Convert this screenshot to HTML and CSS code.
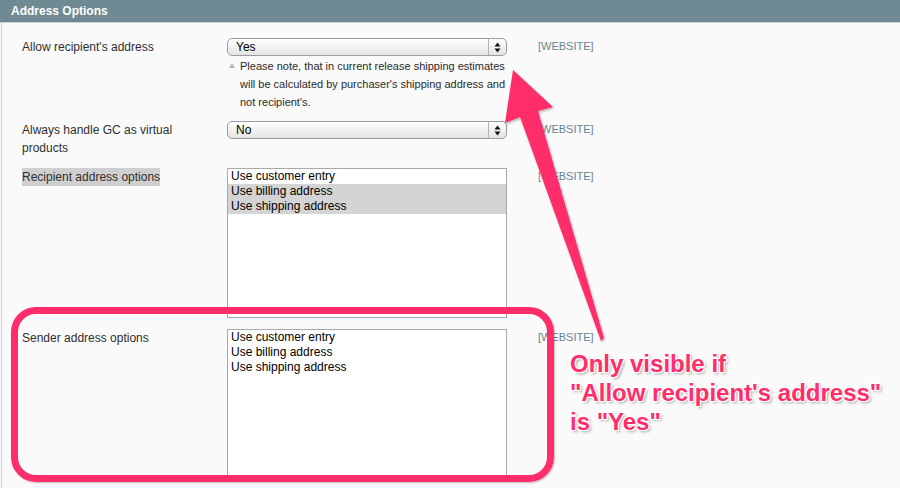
FILE: index.html
```html
<!DOCTYPE html>
<html lang="en">
<head>
    <meta charset="UTF-8">
    <meta name="viewport" content="width=device-width, initial-scale=1.0">
    <title>Address Options</title>
    <link rel="stylesheet" href="styles.css">
</head>
<body>
    <!-- Section header -->
    <div class="section-head">Address Options</div>

    <div class="fieldset">
        <div class="row">
            <div class="label">Allow recipient's address</div>
            <div class="value">
                <div class="select">
                    <span class="select-text">Yes</span>
                    <span class="select-arrows">
                        <svg width="7" height="11" viewBox="0 0 7 11"><path d="M3.5 0.5 L6.5 4.5 L0.5 4.5 Z M3.5 10.5 L6.5 6.5 L0.5 6.5 Z" fill="#111"/></svg>
                    </span>
                </div>
                <p class="note"><span class="note-icon"></span><span>Please note, that in current release shipping estimates will be calculated by purchaser's shipping address and not recipient's.</span></p>
            </div>
            <div class="scope">[WEBSITE]</div>
        </div>

        <div class="row">
            <div class="label">Always handle GC as virtual products</div>
            <div class="value">
                <div class="select">
                    <span class="select-text">No</span>
                    <span class="select-arrows">
                        <svg width="7" height="11" viewBox="0 0 7 11"><path d="M3.5 0.5 L6.5 4.5 L0.5 4.5 Z M3.5 10.5 L6.5 6.5 L0.5 6.5 Z" fill="#111"/></svg>
                    </span>
                </div>
            </div>
            <div class="scope">[WEBSITE]</div>
        </div>

        <div class="row">
            <div class="label"><span class="highlight">Recipient address options</span></div>
            <div class="value">
                <div class="listbox">
                    <div class="option">Use customer entry</div>
                    <div class="option selected">Use billing address</div>
                    <div class="option selected">Use shipping address</div>
                </div>
            </div>
            <div class="scope">[WEBSITE]</div>
        </div>

        <div class="row">
            <div class="label">Sender address options</div>
            <div class="value">
                <div class="listbox">
                    <div class="option">Use customer entry</div>
                    <div class="option">Use billing address</div>
                    <div class="option">Use shipping address</div>
                </div>
            </div>
            <div class="scope">[WEBSITE]</div>
        </div>
    </div>

    <!-- Annotation -->
    <div class="callout-box"></div>
    <svg class="callout-arrow" width="900" height="488" viewBox="0 0 900 488">
        <defs>
            <filter id="shadow" x="-10%" y="-10%" width="130%" height="130%">
                <feDropShadow dx="1" dy="1.5" stdDeviation="1" flood-color="#000" flood-opacity="0.3"/>
            </filter>
        </defs>
        <polygon points="513,70 553,107 538,111 604,338 601,341 520,117 505,123" fill="#ff2d6a" filter="url(#shadow)"/>
    </svg>
    <div class="callout-text">Only visible if<br>"Allow recipient's address"<br>is "Yes"</div>
</body>
</html>
```

FILE: styles.css
```css
body {
    margin: 0;
    padding: 0;
    height: 488px;
    overflow: hidden;
    background: #fafafa;
    font-family: "Liberation Sans", Arial, sans-serif;
    font-size: 12px;
    color: #2f2f2f;
    position: relative;
}

.section-head {
    height: 22px;
    line-height: 22px;
    padding-left: 11px;
    background: #6f8a92;
    border-bottom: 1px solid #c9d1d4;
    color: #fff;
    font-weight: bold;
    font-size: 12px;
}

.fieldset {
    margin-left: 1px;
    border-left: 1px solid #d2d2d2;
    padding-top: 15px;
    height: 465px;
    box-sizing: border-box;
    overflow: hidden;
}

.row {
    display: flex;
    align-items: flex-start;
    padding-left: 20px;
    margin-bottom: 11px;
}

.row:last-child {
    margin-bottom: 0;
}

.label {
    width: 205px;
    padding-right: 20px;
    box-sizing: border-box;
    line-height: 18px;
}

.highlight {
    background: #cfcfcf;
    padding: 2px 0;
}

.value {
    width: 280px;
}

.scope {
    padding-left: 31px;
    font-size: 11px;
    line-height: 17px;
    color: #6b8391;
}

.select {
    display: flex;
    height: 18px;
    box-sizing: border-box;
    border: 1px solid #9c9c9c;
    border-radius: 5px;
    background: linear-gradient(#ffffff, #f1f1f1 50%, #e4e4e4);
    box-shadow: inset 0 1px 0 #fff;
}

.select-text {
    flex: 1;
    padding-left: 8px;
    line-height: 16px;
    color: #000;
}

.select-arrows {
    width: 17px;
    border-left: 1px solid #b4b4b4;
    display: flex;
    justify-content: center;
    align-items: center;
}

.note {
    display: flex;
    margin: 1px 0 -1px;
    font-size: 11px;
    line-height: 18px;
    color: #2a2a2a;
}

.note-icon {
    flex: none;
    width: 0;
    height: 0;
    margin: 6px 5px 0 2px;
    border-left: 3px solid transparent;
    border-right: 3px solid transparent;
    border-bottom: 5px solid #a6bac6;
}

.listbox {
    height: 150px;
    box-sizing: border-box;
    border: 1px solid #a9a9a9;
    background: #fff;
    color: #000;
}

.option {
    line-height: 15px;
    padding-left: 3px;
}

.option.selected {
    background: #d4d4d4;
}

/* annotation layer */
.callout-box {
    position: absolute;
    left: 11px;
    top: 307px;
    width: 543px;
    height: 175px;
    box-sizing: border-box;
    border: 7px solid #ff2d6a;
    border-radius: 25px;
    box-shadow: 1px 1px 2px rgba(0, 0, 0, 0.25);
}

.callout-arrow {
    position: absolute;
    top: 0;
    left: 0;
    pointer-events: none;
}

.callout-text {
    position: absolute;
    left: 570px;
    top: 349px;
    font-size: 24px;
    line-height: 29px;
    font-weight: bold;
    color: #ff2d6a;
    white-space: nowrap;
    text-shadow: -1px -1px 0 #fff, 1px -1px 0 #fff, -1px 1px 0 #fff, 1px 1px 0 #fff,
        0 -1px 0 #fff, 0 1px 0 #fff, -1px 0 0 #fff, 1px 0 0 #fff,
        2px 2px 3px rgba(0, 0, 0, 0.35);
}
```
